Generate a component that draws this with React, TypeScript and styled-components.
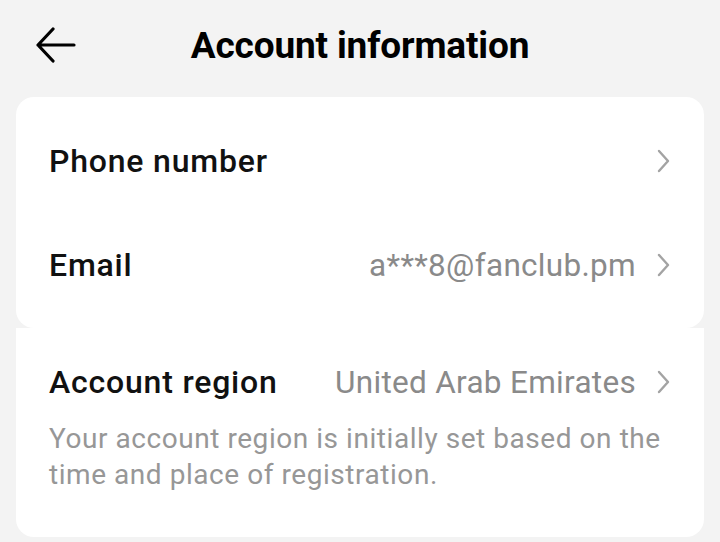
import React from "react";
import styled, { createGlobalStyle } from "styled-components";

const GlobalStyle = createGlobalStyle`
  html, body {
    margin: 0;
    padding: 0;
    background: #f3f3f3;
  }
  body {
    font-family: Roboto, "Liberation Sans", Arial, sans-serif;
    -webkit-font-smoothing: antialiased;
  }
`;

const Page = styled.div`
  width: 720px;
  min-height: 542px;
  background: #f3f3f3;
  padding: 0 16px;
  box-sizing: border-box;
`;

const Header = styled.header`
  position: relative;
  height: 97px;
  box-sizing: border-box;
  padding-bottom: 6px;
  display: flex;
  align-items: center;
  justify-content: center;
`;

const BackButton = styled.button`
  position: absolute;
  left: 18px;
  top: 26px;
  width: 44px;
  height: 38px;
  padding: 0;
  border: none;
  background: transparent;
  display: flex;
  align-items: center;
  justify-content: center;
`;

const Title = styled.h1`
  margin: 0;
  font-family: Roboto, "Liberation Sans", sans-serif;
  font-weight: 700;
  font-size: 37px;
  color: #000;
  letter-spacing: -0.15px;
`;

const Card = styled.section<{ $joinTop?: boolean }>`
  background: #fff;
  border-radius: ${(p) => (p.$joinTop ? "0 0 18px 18px" : "18px")};
  padding: ${(p) => (p.$joinTop ? "28px 34px 44px 33px" : "12px 34px 11px 33px")};
`;

const Row = styled.div<{ $height: number }>`
  height: ${(p) => p.$height}px;
  display: flex;
  align-items: center;
  justify-content: space-between;
`;

const Label = styled.span`
  font-family: Roboto, "Liberation Sans", sans-serif;
  font-weight: 500;
  font-size: 32px;
  color: #111;
  letter-spacing: 0.8px;
`;

const Value = styled.span`
  display: flex;
  align-items: center;
  gap: 21px;
  font-family: Roboto, sans-serif;
  font-size: 31.5px;
  letter-spacing: 0.3px;
  color: #8a8a8a;
`;

const Note = styled.p`
  margin: 13px 0 0;
  font-family: Roboto, sans-serif;
  font-size: 28px;
  letter-spacing: 0.55px;
  line-height: 36px;
  color: #979797;
`;

const Chevron = () => (
  <svg width="13" height="24" viewBox="0 0 13 24" fill="none">
    <path d="M2 2l9 10-9 10" stroke="#a3a3a3" strokeWidth="2.4" strokeLinecap="round" strokeLinejoin="round" />
  </svg>
);

const BackArrow = () => (
  <svg width="42" height="36" viewBox="0 0 42 36" fill="none">
    <path d="M39 18H3M18 2L3 18l15 16" stroke="#000" strokeWidth="3.2" strokeLinecap="round" strokeLinejoin="round" />
  </svg>
);

export default function App() {
  return (
    <Page>
      <GlobalStyle />
      <Header>
        <BackButton aria-label="Back">
          <BackArrow />
        </BackButton>
        <Title>Account information</Title>
      </Header>
      <Card>
        <Row $height={104}>
          <Label>Phone number</Label>
          <Value>
            <Chevron />
          </Value>
        </Row>
        <Row $height={104}>
          <Label>Email</Label>
          <Value>
            a***8@fanclub.pm
            <Chevron />
          </Value>
        </Row>
      </Card>
      <Card $joinTop>
        <Row $height={52}>
          <Label>Account region</Label>
          <Value>
            United Arab Emirates
            <Chevron />
          </Value>
        </Row>
        <Note>
          Your account region is initially set based on the time and place of registration.
        </Note>
      </Card>
    </Page>
  );
}
